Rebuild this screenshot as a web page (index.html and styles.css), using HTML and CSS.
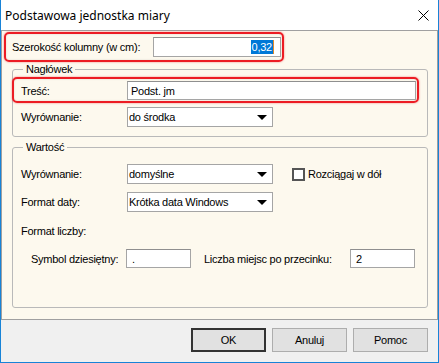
FILE: index.html
```html
<!DOCTYPE html>
<html lang="pl">
<head>
    <meta charset="UTF-8">
    <title>Podstawowa jednostka miary</title>
    <link rel="stylesheet" href="styles.css">
</head>
<body>

    <div class="window">
        <div class="titlebar">
            <span class="title">Podstawowa jednostka miary</span>
            <svg class="close" width="11" height="11" viewBox="0 0 11 11">
                <path d="M0.5 0.5 L10.5 10.5 M10.5 0.5 L0.5 10.5" stroke="#000" stroke-width="1" fill="none"/>
            </svg>
        </div>

        <div class="panel">
            <!-- column width, highlighted -->
            <div class="mark mark-width">
                <span class="label">Szerokość kolumny (w cm):</span>
                <div class="edit edit-width"><span class="sel">0,32</span><span class="caret"></span></div>
            </div>

            <fieldset class="group group-header">
                <legend>Nagłówek</legend>
                <div class="mark mark-row row">
                    <span class="label">Treść:</span>
                    <div class="edit edit-long">Podst. jm</div>
                </div>
                <div class="row row-align">
                    <span class="label">Wyrównanie:</span>
                    <div class="combo">do środka<i class="arrow"></i></div>
                </div>
            </fieldset>

            <fieldset class="group group-value">
                <legend>Wartość</legend>
                <div class="row row-first">
                    <span class="label">Wyrównanie:</span>
                    <div class="combo">domyślne<i class="arrow"></i></div>
                    <span class="check"></span>
                    <span class="check-label">Rozciągaj w dół</span>
                </div>
                <div class="row row-date">
                    <span class="label">Format daty:</span>
                    <div class="combo">Krótka data Windows<i class="arrow"></i></div>
                </div>
                <div class="row row-numfmt">
                    <span class="label">Format liczby:</span>
                </div>
                <div class="row row-sub">
                    <span class="label">Symbol dziesiętny:</span>
                    <div class="edit edit-small">.</div>
                    <span class="label label-places">Liczba miejsc po przecinku:</span>
                    <div class="edit edit-small">2</div>
                </div>
            </fieldset>
        </div>

        <div class="footer">
            <button class="btn btn-default">OK</button>
            <button class="btn">Anuluj</button>
            <button class="btn">Pomoc</button>
        </div>
    </div>

</body>
</html>
```

FILE: styles.css
```css
:root {
    --accent: #1883d7;
    --cream: #fdf9ee;
    --face: #f0f0f0;
    --mark: #ec1c24;
    --group-line: #b9b9b9;
    --edit-line: #a5a5a5;
}

* { margin: 0; padding: 0; box-sizing: border-box; }

body {
    background: #fff;
    font-family: 'Liberation Sans', Arial, sans-serif;
    font-size: 11px;
    letter-spacing: -0.25px;
    color: #000;
}

.window {
    width: 439px;
    height: 363px;
    border: 1px solid var(--accent);
    border-top: 0;
    background: var(--face);
    display: flex;
    flex-direction: column;
}

.titlebar {
    height: 30px;
    flex-shrink: 0;
    background: #fff;
    display: flex;
    align-items: center;
    justify-content: space-between;
    padding: 0 9px 0 4px;
}
.title { font-family: 'Noto Sans', sans-serif; font-size: 12px; letter-spacing: 0; }
.close { display: block; }

.panel {
    height: 290px;
    flex-shrink: 0;
    background: var(--cream);
    border: 1px solid #a0a0a0;
}

/* red annotation frames */
.mark {
    border: 2px solid var(--mark);
    border-radius: 5px;
    box-shadow: 0 0 2px rgba(236, 28, 36, 0.6), inset 0 0 2px rgba(0, 0, 0, 0.15);
}
.mark-width {
    margin: 1px 0 0 2px;
    width: 280px;
    height: 30px;
    display: flex;
    align-items: center;
    justify-content: space-between;
    padding: 0 1px 0 6px;
}

.edit {
    height: 20px;
    background: #fff;
    border: 1px solid var(--edit-line);
    border-top-color: #8f8f8f;
    display: flex;
    align-items: center;
    padding-left: 3px;
    white-space: nowrap;
}
.edit-width { width: 128px; justify-content: flex-end; padding-right: 6px; }
.sel { background: #0078d7; color: #fff; line-height: 14px; padding: 0 1px; }
.caret { width: 1px; height: 14px; background: #e08a2a; }
.edit-long { width: 289px; height: 19px; }
.edit-small { width: 65px; height: 19px; padding-left: 5px; }

.group {
    border: 1px solid var(--group-line);
    border-radius: 3px;
    margin: 0 9px 0 10px;
}
.group legend {
    margin-left: 10px;
    padding: 0 3px;
    line-height: 13px;
}
.group-header { margin-top: 1px; padding: 1px 0 9px; }
.group-value { margin-top: 4px; height: 167px; }

.row {
    display: flex;
    align-items: center;
    padding-left: 8px;
}
.row .label { width: 106px; flex-shrink: 0; }
.mark-row {
    margin-left: -1px;
    width: 407px;
    height: 26px;
    padding: 1px 0 0 7px;
}
.row-align { margin-top: 4px; }
.row-first { margin-top: 10px; }
.row-date { margin-top: 8px; }
.row-numfmt { margin-top: 13px; }
.row-sub { margin-top: 12px; padding-left: 18px; }
.row-sub .label { width: 95px; }
.row-sub .label-places { width: 146px; margin-left: 13px; }

.combo {
    width: 146px;
    height: 20px;
    background: #fff;
    border: 1px solid var(--edit-line);
    display: flex;
    align-items: center;
    justify-content: space-between;
    padding: 0 5px 0 1px;
}
.arrow {
    width: 0;
    height: 0;
    border-left: 5px solid transparent;
    border-right: 5px solid transparent;
    border-top: 5px solid #000;
}

.check {
    width: 13px;
    height: 13px;
    margin-left: 19px;
    border: 2px solid #555;
    background: #fff;
}
.check-label { margin-left: 3px; }

.footer {
    flex: 1;
    display: flex;
    justify-content: flex-end;
    align-items: flex-start;
    gap: 6px;
    padding: 8px 10px 0 0;
}
.btn {
    width: 75px;
    height: 24px;
    font-family: 'Liberation Sans', Arial, sans-serif;
    font-size: 11px;
    letter-spacing: -0.25px;
    color: #000;
    background: #e1e1e1;
    border: 1px solid #adadad;
}
.btn-default { border: 2px solid #333; }
```
